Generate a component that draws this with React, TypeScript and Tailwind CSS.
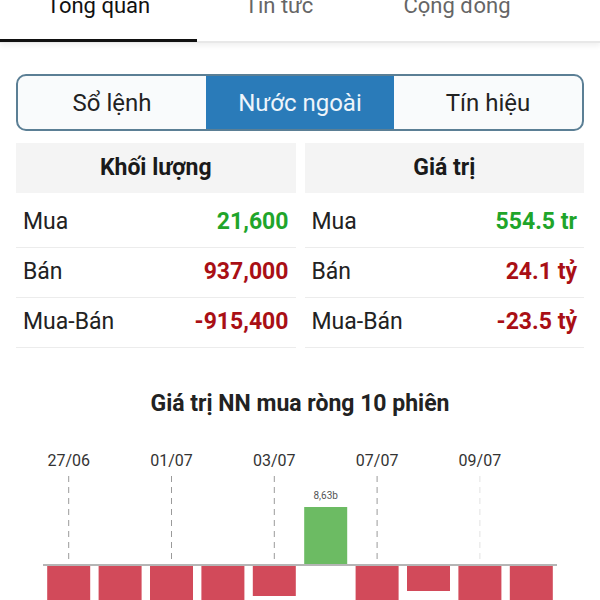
import React from 'react';

const topTabs = [
    { label: 'Tổng quan', w: 'w-[197px]', active: true },
    { label: 'Tin tức', w: 'w-[164px]', active: false },
    { label: 'Cộng đồng', w: 'w-[192px]', active: false },
];

const segments = ['Sổ lệnh', 'Nước ngoài', 'Tín hiệu'];

const volumeRows = [
    { label: 'Mua', value: '21,600', up: true },
    { label: 'Bán', value: '937,000', up: false },
    { label: 'Mua-Bán', value: '-915,400', up: false },
];

const valueRows = [
    { label: 'Mua', value: '554.5 tr', up: true },
    { label: 'Bán', value: '24.1 tỷ', up: false },
    { label: 'Mua-Bán', value: '-23.5 tỷ', up: false },
];

// bar ends in chart coords; baseline is y=126 inside the svg
const bars = [
    { bottom: 220 },
    { bottom: 220 },
    { bottom: 220 },
    { bottom: 220 },
    { bottom: 157 },
    { top: 68, positive: true },
    { bottom: 220 },
    { bottom: 152 },
    { bottom: 220 },
    { bottom: 220 },
];

const dates = ['27/06', '01/07', '03/07', '07/07', '09/07'];

const StatTable = ({ title, rows }: { title: string; rows: typeof volumeRows }) => (
    <div className="flex flex-col">
        <div className="h-[50px] bg-[#f4f4f4] flex items-center justify-center text-[23px] font-bold text-[#1a1a1a]">
            {title}
        </div>
        <div className="mt-[5px]">
            {rows.map((r) => (
                <div key={r.label} className="h-[50px] flex items-center justify-between border-b border-[#ececec] pl-[7px] pr-[7px]">
                    <span className="text-[23px] text-[#222]">{r.label}</span>
                    <span className={`text-[23px] font-bold ${r.up ? 'text-[#1fa52b]' : 'text-[#a90f15]'}`}>{r.value}</span>
                </div>
            ))}
        </div>
    </div>
);

const NetChart = () => {
    const x0 = 43;
    const slot = 51.4;
    const barW = 43;
    const base = 126;
    return (
        <svg width="600" height="180" className="block">
            {dates.map((d, i) => {
                const cx = x0 + slot * (i * 2 + 0.5);
                return (
                    <g key={d}>
                        <text x={cx} y={27} textAnchor="middle" fontSize="16" fill="#333" fontFamily="Roboto">{d}</text>
                        <line x1={cx} y1={37} x2={cx} y2={120} stroke={i === 4 ? '#e2e2e2' : '#9a9a9a'} strokeWidth="1" strokeDasharray="6 5" />
                    </g>
                );
            })}
            {bars.map((b, i) => {
                const x = x0 + slot * i + (slot - barW) / 2;
                if (b.positive) {
                    return (
                        <g key={i}>
                            <rect x={x} y={b.top} width={barW} height={base - b.top!} fill="#6cbb63" />
                            <text x={x + barW / 2} y={60} textAnchor="middle" fontSize="10" fill="#555" fontFamily="Roboto">8,63b</text>
                        </g>
                    );
                }
                return <rect key={i} x={x} y={base + 1} width={barW} height={b.bottom! - base - 1} fill="#d24a5a" />;
            })}
            <line x1={x0} y1={base} x2={557} y2={base} stroke="#b5b5b5" strokeWidth="2" />
        </svg>
    );
};

export default function App() {
    return (
        <div className="w-[600px] h-[600px] overflow-hidden bg-white font-['Roboto',sans-serif]">
            {/* Top tabs */}
            <div className="relative h-[43px] flex border-b-2 border-[#e8e8e8] shadow-[0_3px_5px_rgba(0,0,0,0.06)]">
                {topTabs.map((t) => (
                    <div key={t.label} className={`${t.w} relative flex justify-center`}>
                        <span className={`-mt-[5px] text-[22px] leading-[22px] ${t.active ? 'text-[#111]' : 'text-[#666]'}`}>{t.label}</span>
                        {t.active && <span className="absolute left-0 right-0 bottom-[-1px] h-[3px] bg-[#111]"></span>}
                    </div>
                ))}
            </div>

            <div className="px-4">
                {/* Segmented control */}
                <div className="mt-[31px] h-[57px] grid grid-cols-3 rounded-[10px] border-2 border-[#5b7f95] overflow-hidden bg-[#f9fbfc]">
                    {segments.map((s, i) => (
                        <div
                            key={s}
                            className={`flex items-center justify-center text-[24px] ${i === 1 ? 'bg-[#2a7bb9] text-[#eef5fb]' : 'text-[#222]'}`}
                        >
                            {s}
                        </div>
                    ))}
                </div>

                {/* Foreign trading tables */}
                <div className="mt-[12px] grid grid-cols-2 gap-[9px]">
                    <StatTable title="Khối lượng" rows={volumeRows} />
                    <StatTable title="Giá trị" rows={valueRows} />
                </div>
            </div>

            {/* Chart */}
            <div className="mt-[43px] text-center text-[23px] font-bold text-[#222] leading-[26px]">Giá trị NN mua ròng 10 phiên</div>
            <div className="mt-[22px]">
                <NetChart />
            </div>
        </div>
    );
}
